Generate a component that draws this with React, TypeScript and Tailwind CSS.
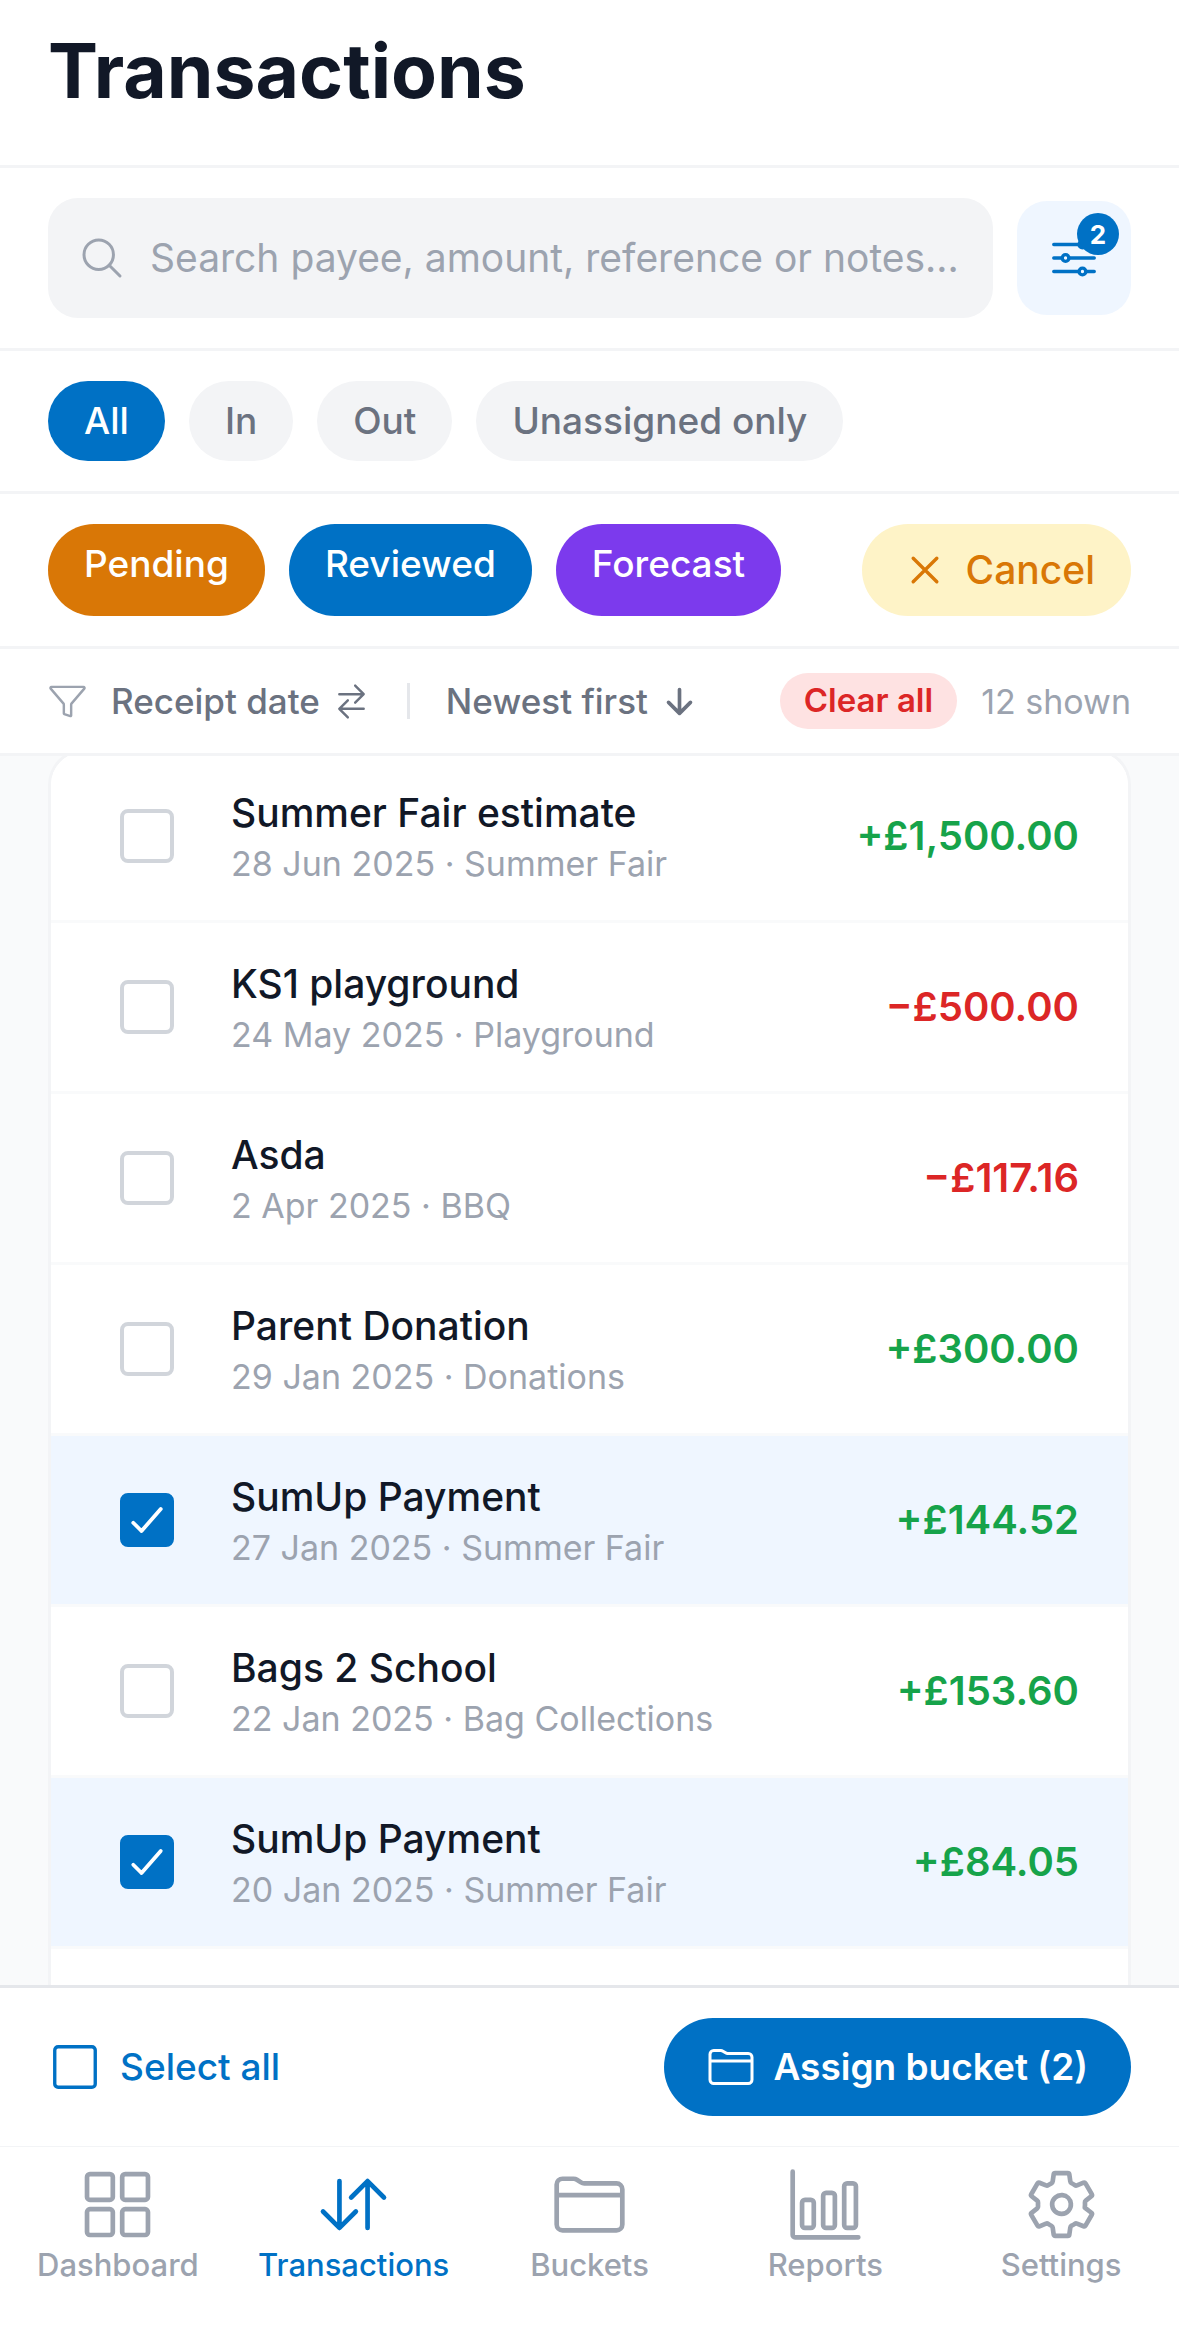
import { useState } from 'react';
import {
  IoArrowDown,
  IoBarChartOutline,
  IoCheckmark,
  IoCloseOutline,
  IoFolderOutline,
  IoFunnelOutline,
  IoGridOutline,
  IoOptionsOutline,
  IoSearchOutline,
  IoSettingsOutline,
  IoSquareOutline,
  IoSwapHorizontal,
  IoSwapVertical,
} from 'react-icons/io5';

/* ─── Data ─────────────────────────────────────────────────── */

interface Transaction {
  id: number;
  payee: string;
  date: string;
  bucket: string;
  amount: string;
  incoming: boolean;
}

const TRANSACTIONS: Transaction[] = [
  { id: 1, payee: 'Summer Fair estimate', date: '28 Jun 2025', bucket: 'Summer Fair', amount: '£1,500.00', incoming: true },
  { id: 2, payee: 'KS1 playground', date: '24 May 2025', bucket: 'Playground', amount: '£500.00', incoming: false },
  { id: 3, payee: 'Asda', date: '2 Apr 2025', bucket: 'BBQ', amount: '£117.16', incoming: false },
  { id: 4, payee: 'Parent Donation', date: '29 Jan 2025', bucket: 'Donations', amount: '£300.00', incoming: true },
  { id: 5, payee: 'SumUp Payment', date: '27 Jan 2025', bucket: 'Summer Fair', amount: '£144.52', incoming: true },
  { id: 6, payee: 'Bags 2 School', date: '22 Jan 2025', bucket: 'Bag Collections', amount: '£153.60', incoming: true },
  { id: 7, payee: 'SumUp Payment', date: '20 Jan 2025', bucket: 'Summer Fair', amount: '£84.05', incoming: true },
];

const DIRECTIONS = ['All', 'In', 'Out', 'Unassigned only'];

const STATUSES = [
  { label: 'Pending', color: 'bg-[#d97706]' },
  { label: 'Reviewed', color: 'bg-[#0071c5]' },
  { label: 'Forecast', color: 'bg-[#7c3aed]' },
];

const TABS = [
  { label: 'Dashboard', Icon: IoGridOutline },
  { label: 'Transactions', Icon: IoSwapVertical },
  { label: 'Buckets', Icon: IoFolderOutline },
  { label: 'Reports', Icon: IoBarChartOutline },
  { label: 'Settings', Icon: IoSettingsOutline },
];

/* ─── Filters ──────────────────────────────────────────────── */

function SearchRow() {
  return (
    <div className="flex items-center gap-6 border-b-3 border-[#f3f4f6] px-12 py-[30px]">
      <label className="flex h-[120px] min-w-0 flex-1 items-center gap-6 rounded-[30px] bg-[#f3f4f6] px-[30px]">
        <IoSearchOutline className="size-12 shrink-0 text-[#9ca3af]" />
        <input
          type="text"
          aria-label="Search transactions"
          placeholder="Search payee, amount, reference or notes..."
          className="min-w-0 flex-1 bg-transparent text-[39px] leading-[48px] outline-none placeholder:text-[#9ca3af]"
        />
      </label>
      <button
        type="button"
        aria-label="Filters"
        className="relative flex size-[114px] shrink-0 items-center justify-center rounded-[30px] bg-[#eff6ff] text-[#0071c5]"
      >
        <IoOptionsOutline className="size-[54px]" />
        <span className="absolute top-3 right-3 flex size-[42px] items-center justify-center rounded-full bg-[#0071c5] text-[26px] font-bold text-white">
          2
        </span>
      </button>
    </div>
  );
}

function DirectionChips() {
  const [active, setActive] = useState('All');
  return (
    <div className="flex items-center gap-6 border-b-3 border-[#f3f4f6] px-12 py-[30px]">
      {DIRECTIONS.map((name) => (
        <button
          key={name}
          type="button"
          onClick={() => setActive(name)}
          className={`h-20 rounded-full px-9 text-[37px] font-medium ${
            active === name ? 'bg-[#0071c5] text-white' : 'bg-[#f3f4f6] text-[#6b7280]'
          }`}
        >
          {name}
        </button>
      ))}
    </div>
  );
}

function StatusChips() {
  return (
    <div className="flex gap-6 border-b-3 border-[#f3f4f6] px-12 py-[30px]">
      {STATUSES.map(({ label, color }) => (
        <button
          key={label}
          type="button"
          className={`flex h-[92px] items-start rounded-full px-9 pt-[18px] text-[37px] leading-[44px] font-medium text-white ${color}`}
        >
          {label}
        </button>
      ))}
      <button
        type="button"
        className="ml-auto flex h-[92px] items-center gap-[14px] rounded-full bg-[#fef3c7] px-9 text-[39px] font-medium text-[#d97706]"
      >
        <IoCloseOutline className="size-[54px]" />
        Cancel
      </button>
    </div>
  );
}

function SortRow() {
  return (
    <div className="flex h-[107px] items-center border-b-3 border-[#f3f4f6] px-12 text-[35px] font-medium text-[#6b7280]">
      <IoFunnelOutline className="size-[39px] shrink-0 text-[#9ca3af]" />
      <button type="button" className="ml-6 flex items-center gap-3">
        Receipt date
        <IoSwapHorizontal className="size-[39px]" />
      </button>
      <span className="mx-9 h-9 w-[3px] bg-[#e5e7eb]" />
      <button type="button" className="flex items-center gap-3">
        Newest first
        <IoArrowDown className="size-[39px]" />
      </button>
      <button type="button" className="ml-auto h-14 rounded-full bg-[#fee2e2] px-6 text-[33px] font-semibold text-[#dc2626]">
        Clear all
      </button>
      <span className="ml-6 text-[34px] font-normal text-[#9ca3af]">12 shown</span>
    </div>
  );
}

/* ─── List ─────────────────────────────────────────────────── */

interface RowProps {
  item: Transaction;
  selected: boolean;
  onToggle: () => void;
}

function TransactionRow({ item, selected, onToggle }: RowProps) {
  return (
    <li className={`border-b-3 border-[#f9fafb] ${selected ? 'bg-[#eff6ff]' : 'bg-white'}`}>
      <label className="flex h-[168px] items-center pr-[49px] pl-[69px]">
        <span className="relative size-[54px] shrink-0">
          <input
            type="checkbox"
            checked={selected}
            onChange={onToggle}
            className="block size-[54px] appearance-none rounded-[8px] border-4 border-[#d1d5db] checked:border-[#0071c5] checked:bg-[#0071c5]"
          />
          {selected && (
            <IoCheckmark className="pointer-events-none absolute inset-[5px] size-[44px] text-white [&_path]:stroke-[44px]" />
          )}
        </span>
        <span className="ml-[57px] min-w-0 flex-1 pt-1">
          <span className="block truncate text-[39px] leading-[52px] font-medium text-[#111827]">{item.payee}</span>
          <span className="block truncate text-[34px] leading-[50px] text-[#9ca3af]">
            {item.date} · {item.bucket}
          </span>
        </span>
        <span className={`text-[40px] font-semibold ${item.incoming ? 'text-[#16a34a]' : 'text-[#dc2626]'}`}>
          {item.incoming ? '+' : '−'}
          {item.amount}
        </span>
      </label>
    </li>
  );
}

/* ─── Bottom bars ──────────────────────────────────────────── */

function ActionBar({ count, onSelectAll }: { count: number; onSelectAll: () => void }) {
  return (
    <div className="flex items-center justify-between border-t-3 border-[#e5e7eb] bg-white px-12 py-[30px]">
      <button type="button" onClick={onSelectAll} className="flex items-center gap-[18px] text-[37px] font-medium text-[#0071c5]">
        <IoSquareOutline className="size-[54px]" />
        Select all
      </button>
      <button
        type="button"
        className="flex h-[98px] items-center gap-[18px] rounded-full bg-[#0071c5] px-[43px] text-[37px] font-semibold text-white"
      >
        <IoFolderOutline className="size-12" />
        Assign bucket ({count})
      </button>
    </div>
  );
}

function TabBar() {
  return (
    <nav className="grid h-[179px] grid-cols-5 border-t border-[#f3f4f6] bg-white pt-5">
      {TABS.map(({ label, Icon }) => (
        <a
          key={label}
          href={`#${label.toLowerCase()}`}
          className={`flex flex-col items-center gap-1 text-[31px] leading-[38px] font-medium ${
            label === 'Transactions' ? 'text-[#0071c5]' : 'text-[#9ca3af]'
          }`}
        >
          <Icon className="size-[75px]" />
          {label}
        </a>
      ))}
    </nav>
  );
}

/* ─── Screen ───────────────────────────────────────────────── */

export default function App() {
  const [selected, setSelected] = useState<number[]>([5, 7]);

  const toggle = (id: number) =>
    setSelected((ids) => (ids.includes(id) ? ids.filter((x) => x !== id) : [...ids, id]));

  return (
    <div className="flex h-screen flex-col overflow-hidden bg-white font-['Inter',sans-serif]">
      <header className="h-[168px] shrink-0 border-b-3 border-[#f3f4f6] px-12 pt-6">
        <h1 className="text-[75px] leading-[94px] font-bold text-[#111827]">Transactions</h1>
      </header>
      <div className="shrink-0">
        <SearchRow />
        <DirectionChips />
        <StatusChips />
        <SortRow />
      </div>

      <main className="min-h-0 flex-1 overflow-hidden bg-[#f9fafb] px-12">
        {/* the list is scrolled a little, so the card's top edge is cut off */}
        <ul className="-mt-[7px] min-h-[calc(100%+7px)] overflow-hidden rounded-t-[36px] border-3 border-b-0 border-[#f3f4f6] bg-white">
          {TRANSACTIONS.map((item) => (
            <TransactionRow
              key={item.id}
              item={item}
              selected={selected.includes(item.id)}
              onToggle={() => toggle(item.id)}
            />
          ))}
        </ul>
      </main>

      <div className="shrink-0">
        <ActionBar count={selected.length} onSelectAll={() => setSelected(TRANSACTIONS.map((t) => t.id))} />
        <TabBar />
      </div>
    </div>
  );
}
